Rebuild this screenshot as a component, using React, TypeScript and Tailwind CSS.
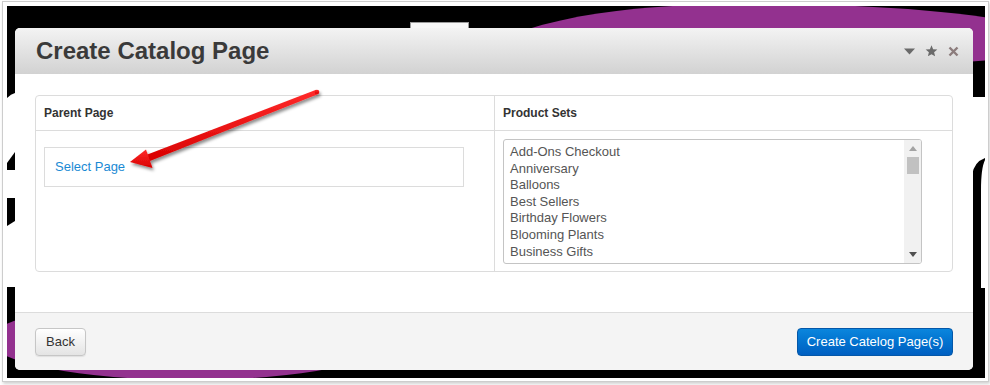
const PRODUCT_SETS = [
  "Add-Ons Checkout",
  "Anniversary",
  "Balloons",
  "Best Sellers",
  "Birthday Flowers",
  "Blooming Plants",
  "Business Gifts",
];

// shaft of the callout arrow, page coords
function shaftPoints() {
  const tail = [317, 92];
  const end = [148, 158];
  const dx = end[0] - tail[0];
  const dy = end[1] - tail[1];
  const len = Math.hypot(dx, dy);
  const px = -dy / len;
  const py = dx / len;
  const p = (x: number, y: number, w: number) => `${x + px * w},${y + py * w}`;
  return [p(tail[0], tail[1], 2.3), p(end[0], end[1], 3.4), p(end[0], end[1], -3.4), p(tail[0], tail[1], -2.3)].join(" ");
}

function Backdrop() {
  return (
    <svg className="absolute inset-0" width="978" height="372" viewBox="7 6 978 372">
      {/* purple blob top right */}
      <path d="M 525 30 C 600 6, 690 4, 760 4 C 850 4, 930 9, 990 18 L 990 60 L 965 62 L 525 34 Z" fill="#93318f" />
      <rect x="410.5" y="22.5" width="58" height="8" fill="#f6f6f6" stroke="#9a9a9a" />
      {/* left side stripes */}
      <path d="M 7 98 Q 11 94 15 93 L 15 152 L 7 163 Z" fill="#fff" />
      <path d="M 7 170 L 15 170 L 15 198 L 7 198 Z" fill="#fff" />
      <path d="M 7 226 L 15 221 L 15 287 L 7 287 Z" fill="#fff" />
      <ellipse cx="190" cy="340" rx="200" ry="40" fill="#93318f" />
      {/* right side stripes */}
      <path d="M 972 97 L 985 97 L 985 288 L 981 288 L 981 190 Q 981 168 985 160 L 985 158 Q 974 162 972 175 Z" fill="#fff" />
    </svg>
  );
}

function Arrow() {
  return (
    <svg className="pointer-events-none absolute left-0 top-0" width="990" height="385">
      <defs>
        <linearGradient id="red" x1="0" y1="0" x2="0" y2="1">
          <stop offset="0" stopColor="#ff2b2b" />
          <stop offset="1" stopColor="#d80000" />
        </linearGradient>
        <filter id="shadow" x="-20%" y="-20%" width="140%" height="140%">
          <feDropShadow dx="1.5" dy="2.5" stdDeviation="1.4" floodColor="#000" floodOpacity="0.45" />
        </filter>
      </defs>
      <g filter="url(#shadow)" fill="url(#red)">
        <polygon points={shaftPoints()} />
        <circle cx="317" cy="92" r="2.3" />
        <polygon points="130,162 146,149.5 152.5,168" />
      </g>
    </svg>
  );
}

function ListBox() {
  return (
    <div className="flex h-[125px] w-[419px] overflow-hidden rounded-[3px] border border-[#c4c4c4] bg-white">
      <ul className="flex-1 pl-[6px] pt-[4px] text-[13px] leading-[16.6px] text-[#555]">
        {PRODUCT_SETS.map((s) => (
          <li key={s}>{s}</li>
        ))}
      </ul>
      <div className="flex w-[17px] flex-col items-center bg-[#f1f1f1]">
        <svg className="mt-[6px]" width="8" height="5" viewBox="0 0 8 5">
          <polygon points="0,5 8,5 4,0" fill="#a3a3a3" />
        </svg>
        <div className="mt-[6px] h-[17px] w-[12px] bg-[#c1c1c1]" />
        <svg className="mb-[6px] mt-auto" width="8" height="5" viewBox="0 0 8 5">
          <polygon points="0,0 8,0 4,5" fill="#505050" />
        </svg>
      </div>
    </div>
  );
}

export default function App() {
  return (
    <div className="relative h-[385px] w-[990px] overflow-hidden bg-white font-['Liberation_Sans',Arial,sans-serif]">
      <div className="ml-[2px] mt-[1px] h-[381px] w-[987px] border border-[#cdcdcd] pb-[3px] pl-[4px] pr-[3px] pt-[4px] shadow-[1px_2px_3px_rgba(0,0,0,0.18)]">
        <div className="relative h-full w-full bg-black pl-[8px] pt-[22px]">
          <Backdrop />

          {/* Modal */}
          <div className="relative flex h-[342px] w-[958px] flex-col overflow-hidden rounded-[5px] bg-white">
            <div className="flex h-[46px] items-center justify-between bg-gradient-to-b from-[#f3f3f3] to-[#d2d2d2] pl-[21px] pr-[14px]">
              <h1 className="text-[24px] font-bold text-[#3a3a3a]">Create Catalog Page</h1>
              <div className="flex items-center gap-[10px]">
                <svg width="11" height="7" viewBox="0 0 11 7">
                  <polygon points="0,0.5 11,0.5 5.5,6.5" fill="#6a6a6a" />
                </svg>
                <svg width="13" height="12" viewBox="0 0 24 23">
                  <polygon
                    points="12,0.5 15.1,8 23.2,8.6 17,13.9 18.9,21.8 12,17.6 5.1,21.8 7,13.9 0.8,8.6 8.9,8"
                    fill="#6a6a6a"
                  />
                </svg>
                <svg width="11" height="11" viewBox="0 0 11 11">
                  <path d="M1.5 1.5 L9.5 9.5 M9.5 1.5 L1.5 9.5" stroke="#8c7c7c" strokeWidth="2.4" />
                </svg>
              </div>
            </div>

            <div className="flex-1 px-[20px] pt-[21px]">
              <div className="grid h-[177px] grid-cols-[459px_1fr] grid-rows-[35px_1fr] rounded-[4px] border border-[#dcdcdc]">
                <div className="flex items-center border-b border-r border-[#dcdcdc] px-[8px] text-[12px] font-bold text-[#333]">
                  Parent Page
                </div>
                <div className="flex items-center border-b border-[#dcdcdc] px-[8px] text-[12px] font-bold text-[#333]">
                  Product Sets
                </div>
                <div className="border-r border-[#dcdcdc] px-[8px] pt-[16px]">
                  <div className="flex h-[40px] w-[420px] items-center border border-[#dcdcdc] pl-[10px]">
                    <a className="text-[13px] text-[#1a8ad4]">Select Page</a>
                  </div>
                </div>
                <div className="px-[8px] pt-[8px]">
                  <ListBox />
                </div>
              </div>
            </div>

            <div className="flex h-[58px] items-center justify-between border-t border-[#dcdcdc] bg-[#f4f4f4] px-[20px]">
              <button className="h-[28px] w-[51px] rounded-[4px] border border-[#c6c6c6] bg-gradient-to-b from-white to-[#e4e4e4] text-[13px] text-[#333] shadow-[0_1px_1px_rgba(0,0,0,0.08)]">
                Back
              </button>
              <button className="h-[28px] w-[156px] rounded-[4px] border border-[#0457a8] bg-gradient-to-b from-[#0b86dd] to-[#005fc1] text-[13px] text-white">
                Create Catelog Page(s)
              </button>
            </div>
          </div>
        </div>
      </div>
      <Arrow />
    </div>
  );
}
